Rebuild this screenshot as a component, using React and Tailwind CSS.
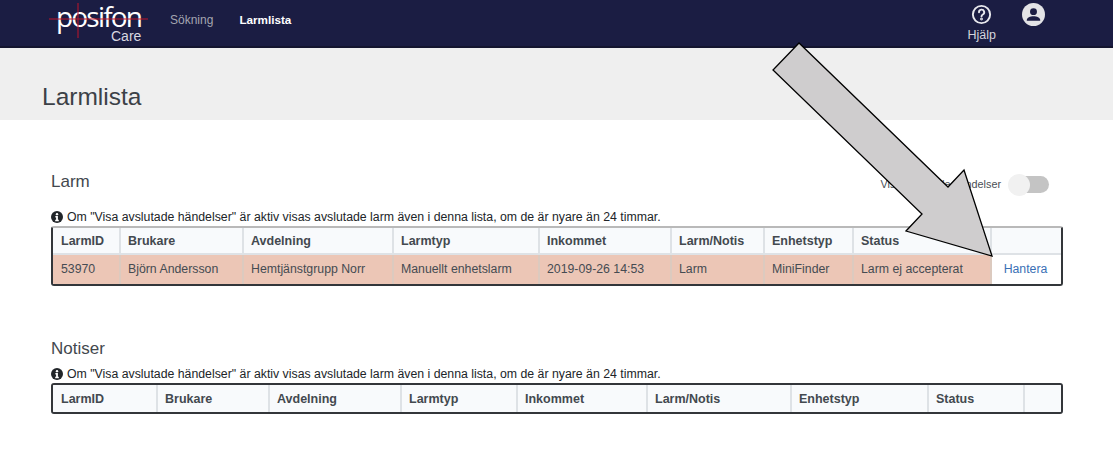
import React from "react";

const Info = () => (
  <svg viewBox="0 0 16 16" className="w-[12px] h-[12px] shrink-0" aria-hidden="true">
    <circle cx="8" cy="8" r="8" fill="#212529" />
    <circle cx="8" cy="4.2" r="1.6" fill="#fff" />
    <path d="M5.8 6.8h3.4v5h1.2v1.7H5.6v-1.7h1.2V8.5h-1z" fill="#fff" />
  </svg>
);

const Note = () => (
  <div className="flex items-center gap-[4px] h-[14px] pl-[51px] text-[12.3px] leading-[14px] text-[#212529]">
    <Info />
    <span>Om "Visa avslutade händelser" är aktiv visas avslutade larm även i denna lista, om de är nyare än 24 timmar.</span>
  </div>
);

const Table = ({ cols, heads, row, lightTop }) => (
  <div className={`ml-[51px] w-[1012px] border-2 border-[#33363a] rounded-[3px] overflow-hidden ${lightTop ? "border-t-[#b9b9b9]" : ""}`}>
    <table className="table-fixed border-collapse w-[1008px] text-[12.3px] text-[#454b52]">
      <colgroup>
        {cols.map((w, i) => (
          <col key={i} style={{ width: w }} />
        ))}
      </colgroup>
      <thead>
        <tr className={`bg-[#f8fafc] ${row ? "h-[26px]" : "h-[27px]"}`}>
          {heads.map((h, i) => (
            <th
              key={i}
              className={`border-r-2 last:border-r-0 border-[#dee2e6] pl-[7px] first:pl-[8px] text-left font-bold text-[12.5px] text-[#43494f] ${row ? "border-b-2 pt-[2px]" : "pt-[2px]"}`}
            >
              {h}
            </th>
          ))}
        </tr>
      </thead>
      {row && (
        <tbody>
          <tr className="h-[30px] bg-[#ecc6b6]">
            {row.map((c, i) => (
              <td key={i} className="border-r-2 last:border-r-0 border-[#dccabf] pl-[7px] first:pl-[8px]">
                {c}
              </td>
            ))}
            <td className="bg-white pr-[2px] text-center text-[#3a70b5]">Hantera</td>
          </tr>
        </tbody>
      )}
    </table>
  </div>
);

const heads = ["LarmID", "Brukare", "Avdelning", "Larmtyp", "Inkommet", "Larm/Notis", "Enhetstyp", "Status", ""];

export default function App() {
  return (
    <div className="relative w-[1113px] h-[476px] overflow-hidden bg-white font-['Liberation_Sans',Arial,sans-serif]">
      <nav className="flex h-[48px] bg-[#1b1d43] border-b-2 border-[#14152f]">
        <div className="relative w-[170px] h-full shrink-0">
          <span className="absolute left-[56px] top-[3px] pr-[2px] text-[28px] leading-[27px] tracking-[-1.8px] text-white font-['Open_Sans',sans-serif]">posifon</span>
          <svg viewBox="0 0 100 38" className="absolute left-[49px] top-[2px] w-[100px] h-[38px]" aria-hidden="true">
            <path d="M0 17h99M29 1v35" stroke="#c0142a" strokeWidth="1" />
          </svg>
          <span className="absolute left-[111px] top-[30px] text-[14px] leading-[13px] text-[#d8d8e0]">Care</span>
        </div>
        <span className="mt-[13px] text-[12px] leading-[14px] text-[#a4a5b0]">Sökning</span>
        <span className="ml-[26px] mt-[13px] text-[11.7px] leading-[14px] font-bold text-white">Larmlista</span>
        <div className="ml-auto mr-[68px] mt-[5px] flex items-start gap-[26px]">
          <div className="flex flex-col items-center">
            <svg viewBox="0 0 24 24" className="w-[23px] h-[23px] -mt-[2px]" fill="none" stroke="#e9e9ee" strokeWidth="2" strokeLinecap="round" aria-hidden="true">
              <circle cx="12" cy="12" r="9" />
              <path d="M9.4 9.6a2.7 2.7 0 1 1 4 2.4c-.9.5-1.4 1-1.4 2" />
              <circle cx="12" cy="16.8" r=".5" fill="#e9e9ee" />
            </svg>
            <span className="mt-[2px] text-[12.5px] leading-[14px] text-[#d4d5dc]">Hjälp</span>
          </div>
          <svg viewBox="0 0 24 24" className="w-[23px] h-[23px] -mt-[2px]" aria-hidden="true">
            <circle cx="12" cy="12" r="12" fill="#e3e3e6" />
            <circle cx="12" cy="9" r="3.6" fill="#1b1d43" />
            <path d="M5 18c0-3 3.6-4.3 7-4.3s7 1.3 7 4.3v.6H5z" fill="#1b1d43" />
          </svg>
        </div>
      </nav>

      <header className="h-[72px] bg-[#efefef] pl-[42px] pt-[35px]">
        <h1 className="text-[24.5px] leading-[28px] text-[#3c4147]">Larmlista</h1>
      </header>

      <section className="mt-[52px]">
        <div className="flex items-center h-[20px] pl-[51px] pr-[64px]">
          <h2 className="text-[17px] leading-[20px] text-[#43484e]">Larm</h2>
          <span className="ml-auto mt-[5px] text-[10.8px] text-[#4a4f55]">Visa avslutade händelser</span>
          <span className="relative ml-[10px] mt-[4px] block w-[38px] h-[17px] rounded-full bg-[#c4c4c4]">
            <span className="absolute -left-[3px] -top-[2px] w-[22px] h-[22px] rounded-full bg-[#f1f1f1]" />
          </span>
        </div>
        <div className="mt-[18px] mb-[2px]"><Note /></div>
        <Table
          lightTop
          cols={[67, 123, 150, 146, 132, 93, 89, 138, 70]}
          heads={heads}
          row={["53970", "Björn Andersson", "Hemtjänstgrupp Norr", "Manuellt enhetslarm", "2019-09-26 14:53", "Larm", "MiniFinder", "Larm ej accepterat"]}
        />
      </section>

      <section className="mt-[53px]">
        <h2 className="pl-[51px] text-[17px] leading-[20px] text-[#43484e]">Notiser</h2>
        <div className="mt-[8px] mb-[2px]"><Note /></div>
        <Table cols={[104, 112, 132, 116, 130, 144, 137, 96, 37]} heads={heads} />
      </section>

      <svg viewBox="0 0 1113 476" className="absolute inset-0 w-[1113px] h-[476px] pointer-events-none" aria-hidden="true">
        <polygon points="799,43 773,70 922,214 906,231 992,256 964,170 948,187" fill="#cfcdce" stroke="#000" strokeWidth="1.3" />
      </svg>
    </div>
  );
}
